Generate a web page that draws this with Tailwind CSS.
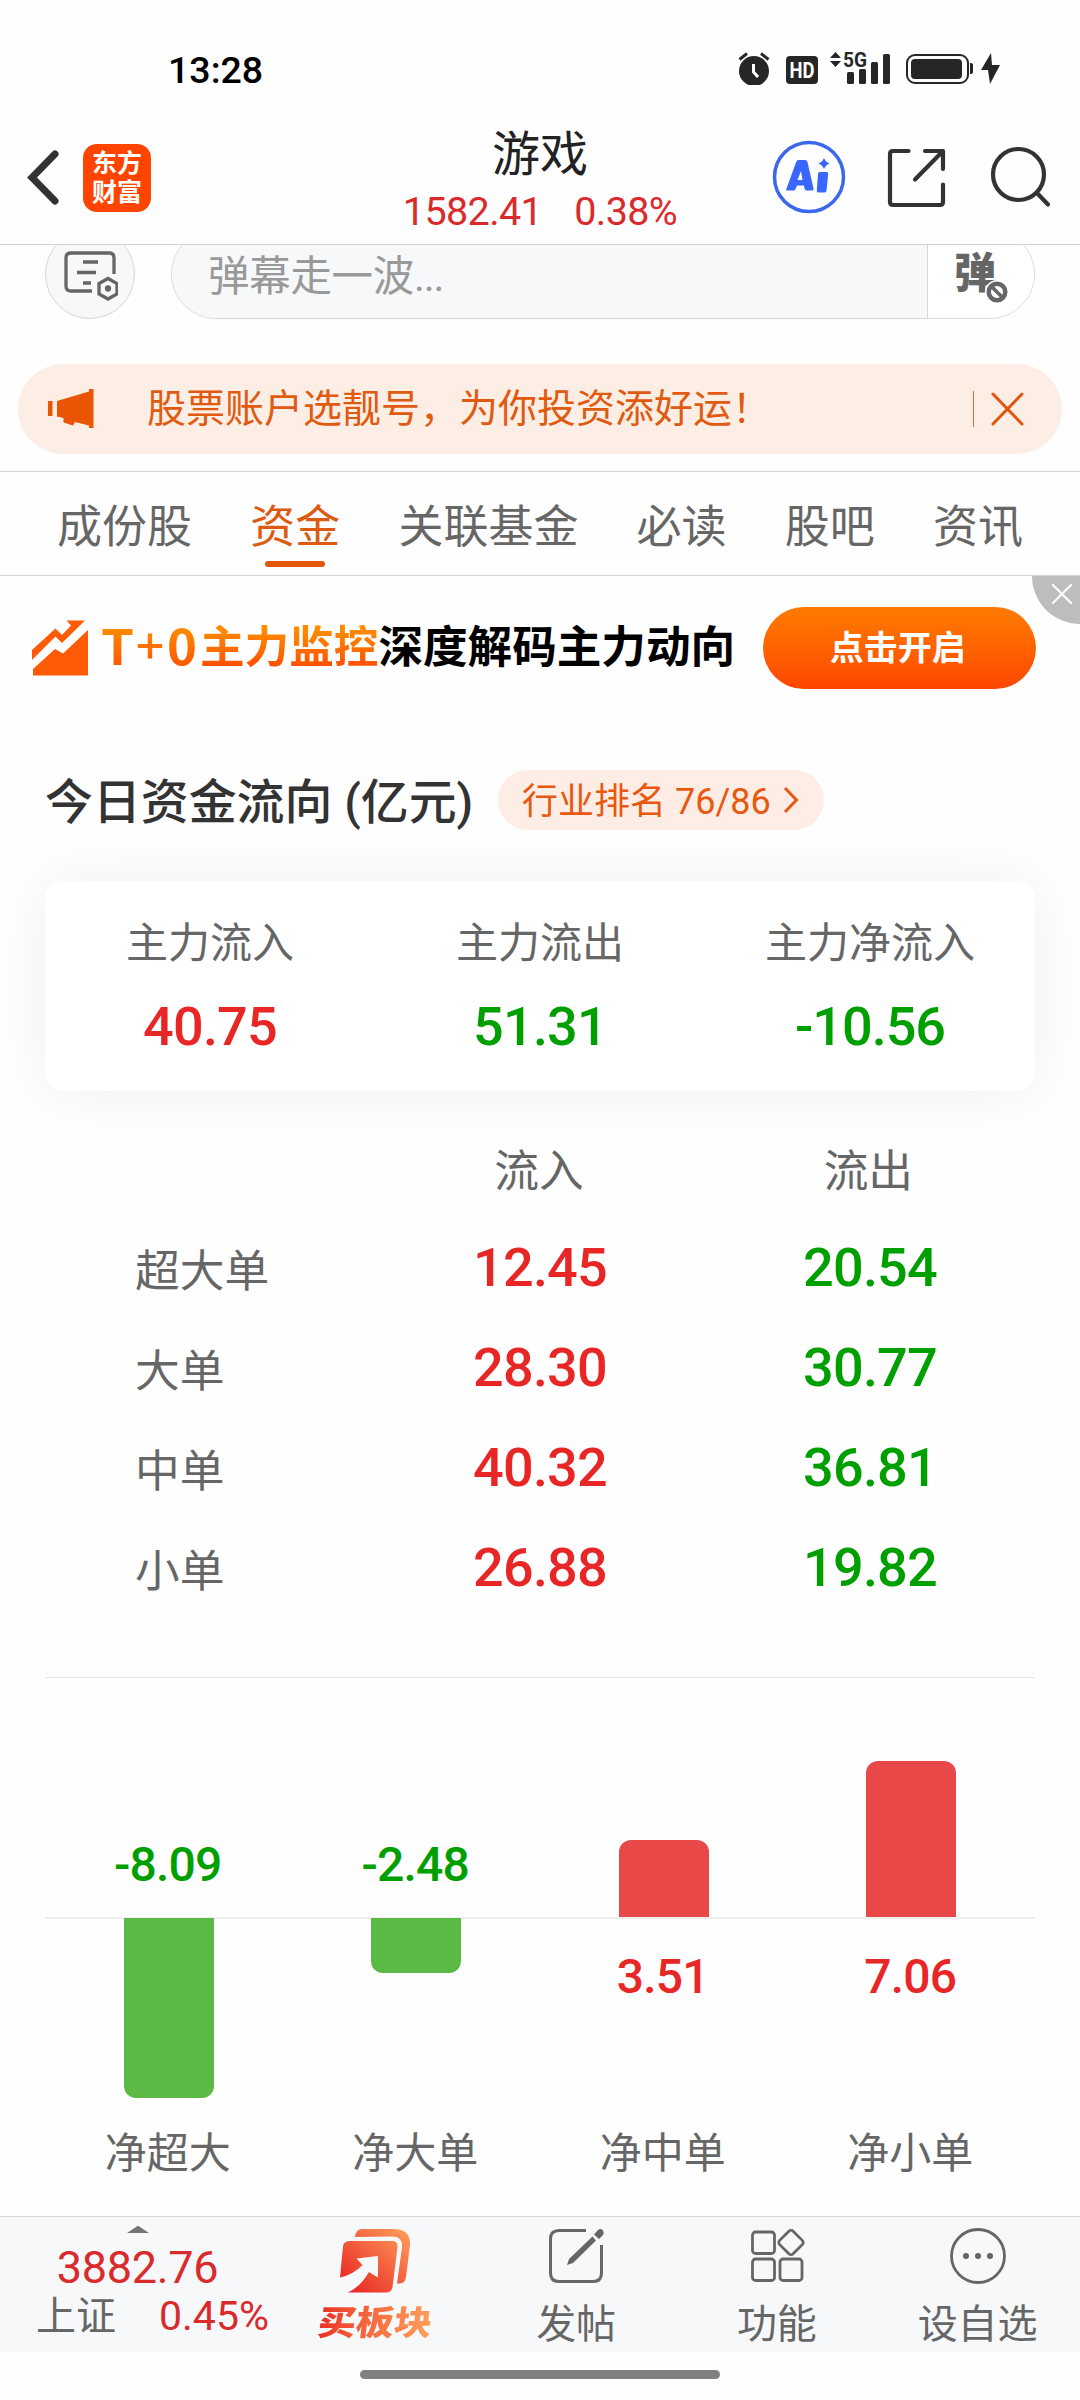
<!DOCTYPE html>
<html lang="zh-CN">
<head>
<meta charset="utf-8">
<title>游戏</title>
<script src="https://cdn.jsdelivr.net/npm/@tailwindcss/browser@4"></script>
</head>
<body class="bg-[#fefefe]">
<div class="relative flex h-[2400px] w-[1080px] flex-col overflow-hidden bg-[#fefefe] font-['Roboto','Noto_Sans_CJK_SC',sans-serif] text-[#666]">

  <!-- status bar -->
  <div class="flex h-[120px] shrink-0 items-start justify-between pr-[80px] pl-[168px] pt-[48px]">
    <div class="text-[37.500px] leading-[44px] font-medium text-black">13:28</div>
    <svg class="mt-[1px] h-[36px] w-[264px]" viewBox="736 49 264 36" fill="#262626">
      <circle cx="754" cy="71" r="15"/>
      <path d="M739.500 59.500 747 53.500M768.500 59.500 761 53.500" stroke="#262626" stroke-width="3"/>
      <path d="M753.500 64v8l4.500 5" fill="none" stroke="#fff" stroke-width="3"/>
      <rect x="786" y="56" width="32" height="28" rx="4"/>
      <text x="802" y="78" text-anchor="middle" font-family="Roboto" font-weight="700" font-size="22" textLength="25" lengthAdjust="spacingAndGlyphs" fill="#fff">HD</text>
      <path d="M835.500 52l5.500 6h-11zM835.500 67l5.500-6h-11z"/>
      <text x="843" y="67" font-family="Roboto" font-weight="700" font-size="21" textLength="24" lengthAdjust="spacingAndGlyphs">5G</text>
      <rect x="847" y="72" width="7" height="12" rx="1.500"/><rect x="859" y="69" width="7" height="15" rx="1.500"/><rect x="871" y="62" width="7" height="22" rx="1.500"/><rect x="883" y="54" width="7" height="30" rx="1.500"/>
      <rect x="907" y="55" width="61" height="28" rx="8" fill="none" stroke="#262626" stroke-width="2"/>
      <rect x="911" y="59" width="51" height="20" rx="4"/>
      <path d="M970 63c3 0 3 1 3 3v5c0 2 0 3-3 3z"/>
      <path d="M991 53l-10 17h8l-1 0 2 14 10-19h-8z"/>
    </svg>
  </div>

  <!-- header -->
  <header class="flex h-[124px] shrink-0 items-start">
    <div class="flex w-[380px] gap-[24px] pl-[27px] pt-[24px]">
      <svg class="mt-[6px] h-[55px] w-[32px]" viewBox="0 0 32 55" fill="none" stroke="#333" stroke-width="7" stroke-linecap="round" stroke-linejoin="miter"><path d="M28 4 5 27.500 28 51"/></svg>
      <div class="flex h-[68px] w-[68px] flex-col items-center justify-center rounded-[14px] bg-[#ff4400] text-[25px] leading-[29px] font-bold text-white"><span>东方</span><span>财富</span></div>
    </div>
    <div class="flex w-[320px] flex-col items-center pt-[7px]">
      <h1 class="text-[48px] leading-[56px] text-[#222]">游戏</h1>
      <div class="mt-[6px] flex gap-[32px] text-[39.500px] leading-[46px] tracking-[-0.600px] whitespace-nowrap text-[#d92b2b]"><span>1582.41</span><span>0.38%</span></div>
    </div>
    <div class="flex flex-1 pl-[72px] pt-[20px]">
      <svg class="h-[74px] w-[74px]" viewBox="772 140 74 74" fill="#3866ff">
        <circle cx="809" cy="177" r="34.500" fill="none" stroke="#3b66ee" stroke-width="3.500"/>
        <path fill-rule="evenodd" d="M798 160h7q2 0 2.500 2l6 26.500q.5 2-2 2h-5q-1.500 0-2-2l-.5-3h-7l-1.500 3.500q-.7 1.500-2 1.500h-6q-2 0-1-2l9.500-26q.8-2.500 2-2.500zM801 171l-3.500 9h5z"/>
        <path d="M819.500 172h7q2 0 1.700 2l-1.700 16.500q-.3 2-2 2h-6q-2 0-1.700-2l1.200-16.500q.2-2 1.500-2zM824 158q1.500 4 5.500 5.500-4 1.500-5.500 5.500-1.500-4-5.500-5.500 4-1.500 5.500-5.500z"/>
      </svg>
      <svg class="ml-[41px] mt-[8px] h-[60px] w-[60px]" viewBox="887 148 60 60" fill="none" stroke="#333" stroke-width="4.200" stroke-linecap="round" stroke-linejoin="round"><path d="M908.500 151H893q-3 0-3 3v48q0 3 3 3h47q3 0 3-3v-17.500M925 151h18v18M943 151l-28 28.500"/></svg>
      <svg class="ml-[43px] mt-[6px] h-[62px] w-[62px]" viewBox="990 146 62 62" fill="none" stroke="#333" stroke-width="4.200" stroke-linecap="round"><circle cx="1018.500" cy="174.500" r="25.500"/><path d="M1037 193l11 11.500"/></svg>
    </div>
  </header>

  <!-- comment input, scrolled under the header -->
  <div class="flex h-[120px] shrink-0 items-start overflow-hidden border-t border-[#cfd1d5] pl-[45px]">
    <div class="-mt-[16px] flex h-[90px] w-[90px] items-center justify-center rounded-full border border-[#d5d7db] bg-[#f7f8fa]">
      <svg class="mt-[2px] h-[54px] w-[56px]" viewBox="62 248 56 54" fill="none" stroke="#666" stroke-width="3.300"><path d="M92 291H71q-5 0-5-5V258q0-5 5-5h38q5 0 5 5v16"/><path d="M83 262h15M77 272.500h19M83 283h8"/><path d="M108 278.500 117 283.500v10.500L108 299l-9-5v-10.500z"/><circle cx="108" cy="288.500" r="1.500"/></svg>
    </div>
    <div class="-mt-[16px] ml-[36px] flex h-[90px] w-[864px] overflow-hidden rounded-[45px] border border-[#d5d7db]">
      <div class="flex-1 bg-[#f7f8fa] pl-[36px] pt-[22px] text-[41.500px] leading-[50px] tracking-[-0.300px] text-[#999]">弹幕走一波<span class="tracking-[-1.200px]">...</span></div>
      <div class="relative w-[107px] border-l border-[#d5d7db] bg-white pl-[26px] pt-[22px] text-[42px] leading-[44px] font-black text-[#666]">弹
        <svg class="absolute left-[57px] top-[50px] h-[24px] w-[24px]" viewBox="0 0 24 24" fill="#fff" stroke="#666" stroke-width="4.500"><circle cx="12" cy="12" r="12" stroke="none"/><circle cx="12" cy="12" r="8.300"/><path d="M6.500 6.500l11 11" stroke-width="3.500"/></svg>
      </div>
    </div>
  </div>

  <!-- notice -->
  <div class="mx-[18px] flex h-[90px] shrink-0 items-center rounded-full bg-[#fceee5] pr-[38px] pl-[30px] text-[39px] text-[#e05a10]">
    <svg class="h-[40px] w-[46px]" viewBox="48 389 46 40" fill="#e95504"><path d="M48 401h4.500v15H48zM57 401l32-9.500V389h4.500v39H89v-2.500l-14-3.500-2 3.500-9.500-3V418l-6.500-1.500z"/></svg>
    <span class="ml-[53px] flex-1 leading-[50px]">股票账户选靓号，为你投资添好运！</span>
    <span class="h-[36px] w-px bg-[#d0743c]"></span>
    <svg class="ml-[17px] h-[34px] w-[33px]" viewBox="0 0 33 34" stroke="#e2560c" stroke-width="3" stroke-linecap="round"><path d="M2 2l29 30M31 2 2 32"/></svg>
  </div>

  <!-- tabs -->
  <nav class="mt-[17px] flex h-[105px] shrink-0 justify-between border-y border-[#d6d7d9] px-[57px] pt-[29px] text-[45px] leading-[54px]">
    <span>成份股</span>
    <span class="flex flex-col items-center text-[#dd5a10]">资金<i class="mt-[6px] h-[6px] w-[60px] rounded-full bg-[#e4560a]"></i></span>
    <span>关联基金</span><span>必读</span><span>股吧</span><span>资讯</span>
  </nav>

  <!-- promo banner -->
  <div class="relative flex h-[144px] shrink-0 items-center pl-[31px] text-[44.600px] font-bold whitespace-nowrap text-black">
    <svg class="h-[58px] w-[58px]" viewBox="31 619 58 58" fill="#ff5a05"><path d="M32 650 55.500 628.500 62 635 71 625.500 66.500 620.500H85L62 643 55.500 636.500 32 660zM33 669 55 649 63 653.500 88 630V675.500H33z"/></svg>
    <svg class="ml-[12px] h-[60px] w-[98px] shrink-0" viewBox="101 618 98 60" font-family="Noto Sans CJK SC" font-weight="700" font-size="48">
      <defs><linearGradient id="t0" gradientUnits="userSpaceOnUse" x1="0" y1="629" x2="0" y2="666"><stop stop-color="#ff8a00"/><stop offset="1" stop-color="#ff5500"/></linearGradient></defs>
      <g fill="url(#t0)"><text x="101" y="665" textLength="33" lengthAdjust="spacingAndGlyphs">T</text><text x="136" y="664" font-weight="500" textLength="28" lengthAdjust="spacingAndGlyphs">+</text><text x="167" y="665" textLength="30" lengthAdjust="spacingAndGlyphs">0</text></g>
    </svg>
    <span class="ml-[1px] bg-gradient-to-b from-[#ff8a00] from-20% to-[#ff5000] to-80% bg-clip-text leading-[60px] text-transparent">主力监控</span>
    <span class="leading-[60px]">深度解码主力动向</span>
    <div class="ml-[28px] flex h-[82px] w-[273px] items-center justify-center rounded-full bg-gradient-to-b from-[#ff7b00] to-[#ff4500] pr-[4px] text-[34px] text-white">点击开启</div>
    <div class="absolute top-0 right-0 h-[48px] w-[48px] rounded-bl-full bg-[#bdbdbd]">
      <svg class="mt-[8px] ml-[20px] h-[20px] w-[20px]" viewBox="0 0 20 20" stroke="#fff" stroke-width="2"><path d="M0 0l20 20M20 0 0 20"/></svg>
    </div>
  </div>

  <!-- fund flow title -->
  <div class="mt-[44px] flex h-[72px] shrink-0 items-center pl-[45px]">
    <h2 class="w-[453px] pt-[6px] text-[47.900px] leading-[60px] font-medium whitespace-nowrap text-[#333]">今日资金流向 (亿元)</h2>
    <div class="flex h-[60px] w-[326px] items-center rounded-full bg-[#feede5] pl-[24px] text-[36px] whitespace-nowrap text-[#e8580e]"><span class="pt-[3px]">行业排名 76/86</span>
      <svg class="ml-[12px] h-[28px] w-[16px]" viewBox="0 0 16 28" fill="none" stroke="#e8580e" stroke-width="3"><path d="M2 2l11.500 12L2 26"/></svg>
    </div>
  </div>

  <!-- summary card -->
  <section class="mx-[45px] mt-[45px] grid h-[210px] shrink-0 grid-cols-3 rounded-[18px] bg-white pt-[36px] text-center shadow-[0_0_60px_rgba(0,0,0,0.06)]">
    <div><p class="text-[42px] leading-[54px]">主力流入</p><p class="mt-[24px] text-[54px] leading-[64px] font-medium tracking-[-0.800px] text-[#e92626]">40.75</p></div>
    <div><p class="text-[42px] leading-[54px]">主力流出</p><p class="mt-[24px] text-[54px] leading-[64px] font-medium tracking-[-0.800px] text-[#009f00]">51.31</p></div>
    <div><p class="text-[42px] leading-[54px]">主力净流入</p><p class="mt-[24px] text-[54px] leading-[64px] font-medium tracking-[-1px] text-[#009f00]">-10.56</p></div>
  </section>

  <!-- order size table -->
  <section class="mx-[45px] mt-[29px] shrink-0 text-[44.700px]">
    <div class="grid h-[98px] grid-cols-3 items-center pt-[7px] pr-[2px] text-center"><span></span><span>流入</span><span>流出</span></div>
    <div class="grid h-[100px] grid-cols-3 items-center text-center"><span class="pt-[9px] pl-[90px] text-left">超大单</span><span class="-mt-[2px] text-[54px] font-medium tracking-[-0.800px] text-[#e92626]">12.45</span><span class="-mt-[2px] text-[54px] font-medium tracking-[-0.800px] text-[#009f00]">20.54</span></div>
    <div class="grid h-[100px] grid-cols-3 items-center text-center"><span class="pt-[9px] pl-[90px] text-left">大单</span><span class="-mt-[2px] text-[54px] font-medium tracking-[-0.800px] text-[#e92626]">28.30</span><span class="-mt-[2px] text-[54px] font-medium tracking-[-0.800px] text-[#009f00]">30.77</span></div>
    <div class="grid h-[100px] grid-cols-3 items-center text-center"><span class="pt-[9px] pl-[90px] text-left">中单</span><span class="-mt-[2px] text-[54px] font-medium tracking-[-0.800px] text-[#e92626]">40.32</span><span class="-mt-[2px] text-[54px] font-medium tracking-[-0.800px] text-[#009f00]">36.81</span></div>
    <div class="grid h-[100px] grid-cols-3 items-center text-center"><span class="pt-[9px] pl-[90px] text-left">小单</span><span class="-mt-[2px] text-[54px] font-medium tracking-[-0.800px] text-[#e92626]">26.88</span><span class="-mt-[2px] text-[54px] font-medium tracking-[-0.800px] text-[#009f00]">19.82</span></div>
  </section>

  <!-- net flow chart -->
  <section class="mx-[45px] mt-[59px] h-[539px] shrink-0 border-t border-[#e4e5e6]">
    <div class="grid h-[240px] grid-cols-4 items-end justify-items-center text-[48px] leading-[56px] font-medium tracking-[-0.800px] text-[#009f00]">
      <span class="mr-[2px] mb-[25px]">-8.09</span>
      <span class="mr-[2px] mb-[25px]">-2.48</span>
      <i class="w-[90px] rounded-t-[12px] bg-[#e84848]" style="height:78px"></i>
      <i class="w-[90px] rounded-t-[12px] bg-[#e84848]" style="height:157px"></i>
    </div>
    <div class="relative grid h-[209px] grid-cols-4 items-start justify-items-center text-[48px] leading-[56px] font-medium tracking-[-0.800px] text-[#e92626]">
      <div class="absolute -top-px left-0 -z-0 h-[2px] w-full bg-[#f0f0f0]"></div>
      <i class="relative w-[90px] rounded-b-[12px] bg-[#5bb946]" style="height:180px"></i>
      <i class="relative w-[90px] rounded-b-[12px] bg-[#5bb946]" style="height:55px"></i>
      <span class="mt-[31px] mr-[2px]">3.51</span>
      <span class="mt-[31px] mr-[2px]">7.06</span>
    </div>
    <div class="grid grid-cols-4 text-center text-[42px] leading-[54px]"><span class="pr-[2px]">净超大</span><span class="pr-[2px]">净大单</span><span class="pr-[2px]">净中单</span><span class="pr-[2px]">净小单</span></div>
  </section>

  <!-- bottom bar -->
  <footer class="flex h-[136px] shrink-0 border-t border-[#d3d5d8] bg-[#f7f8fa] text-[40px]">
    <div class="flex w-[275px] flex-col items-center">
      <svg class="mt-[9px] h-[7px] w-[22px]" viewBox="0 0 22 7" fill="#747579"><path d="M0 7 9 1q2-2 4 0l9 6z"/></svg>
      <div class="mt-[8px] text-[45px] leading-[54px] tracking-[-0.300px] text-[#d92b2b]">3882.76</div>
      <div class="-mt-[4px] flex w-full pl-[36px] leading-[50px]"><span class="pt-[1px]">上证</span><span class="ml-[43px] text-[41px] text-[#d92b2b]">0.45%</span></div>
    </div>
    <div class="flex flex-1 flex-col items-center pt-[11px]">
      <svg class="h-[68px] w-[72px]" viewBox="341 228 72 68">
        <defs><linearGradient id="hot" x1="0" y1="1" x2="1" y2="0"><stop offset="0.100" stop-color="#e92a24"/><stop offset="1" stop-color="#ffa05c"/></linearGradient></defs>
        <path fill="url(#hot)" d="M352 241h42q6 0 5.500 6l-5 40q-.8 5.500-6.500 5.500h-38.500q12.500-5 21.500-20.500l9 5.500V256l-21.500 2.500 6 6.500q-9 9.500-22.500 12.500l3-31q.5-5.500 7-5.500zM357 237q1-8 7-8h31q18 0 17 16l-4 32q-1 7-7 6.500h-2l5-36q1-11-10-11z"/>
      </svg>
      <span class="mt-[3px] scale-y-90 -skew-x-6 bg-gradient-to-r from-[#ea2c24] to-[#ffa05c] bg-clip-text text-[38px] leading-[48px] font-black text-transparent">买板块</span>
    </div>
    <div class="flex flex-1 flex-col items-center pt-[11px]">
      <svg class="h-[58px] w-[56px]" viewBox="549 2228 56 58" fill="none" stroke="#666" stroke-width="3"><path d="M587 2230.500H560q-8.500 0-8.500 8.500v34q0 8.500 8.500 8.500h34q8.500 0 8.500-8.500v-28"/><path fill="#666" stroke="none" d="M568 2265l2-6 23.500-22.500 3.500 4-23 22.500zM595 2234.500l4-4.500q2.500-2 4.500 0t.5 5l-4 4z"/></svg>
      <span class="mt-[12px] leading-[54px]">发帖</span>
    </div>
    <div class="flex flex-1 flex-col items-center pt-[11px]">
      <svg class="h-[58px] w-[56px]" viewBox="750 2228 56 58" fill="none" stroke="#666" stroke-width="2.800"><rect x="753.500" y="2232" width="22" height="21.500" rx="3"/><rect x="753.500" y="2259" width="22" height="21.500" rx="3"/><rect x="781" y="2259" width="22" height="21.500" rx="3"/><rect x="782.500" y="2233" width="19" height="19" rx="3" transform="rotate(45 792 2242.500)"/></svg>
      <span class="mt-[12px] leading-[54px]">功能</span>
    </div>
    <div class="flex flex-1 flex-col items-center pt-[11px] pr-[2px]">
      <svg class="h-[58px] w-[58px]" viewBox="950 2228 58 58" fill="#666"><circle cx="979" cy="2256" r="26.500" fill="none" stroke="#666" stroke-width="2.800"/><circle cx="967" cy="2256" r="3"/><circle cx="979" cy="2256" r="3"/><circle cx="991" cy="2256" r="3"/></svg>
      <span class="mt-[12px] leading-[54px]">设自选</span>
    </div>
  </footer>
  <div class="flex flex-1 justify-center bg-[#fefefe] pt-[18px]"><div class="h-[9px] w-[360px] rounded-full bg-[#808080]"></div></div>
</div>
</body>
</html>
